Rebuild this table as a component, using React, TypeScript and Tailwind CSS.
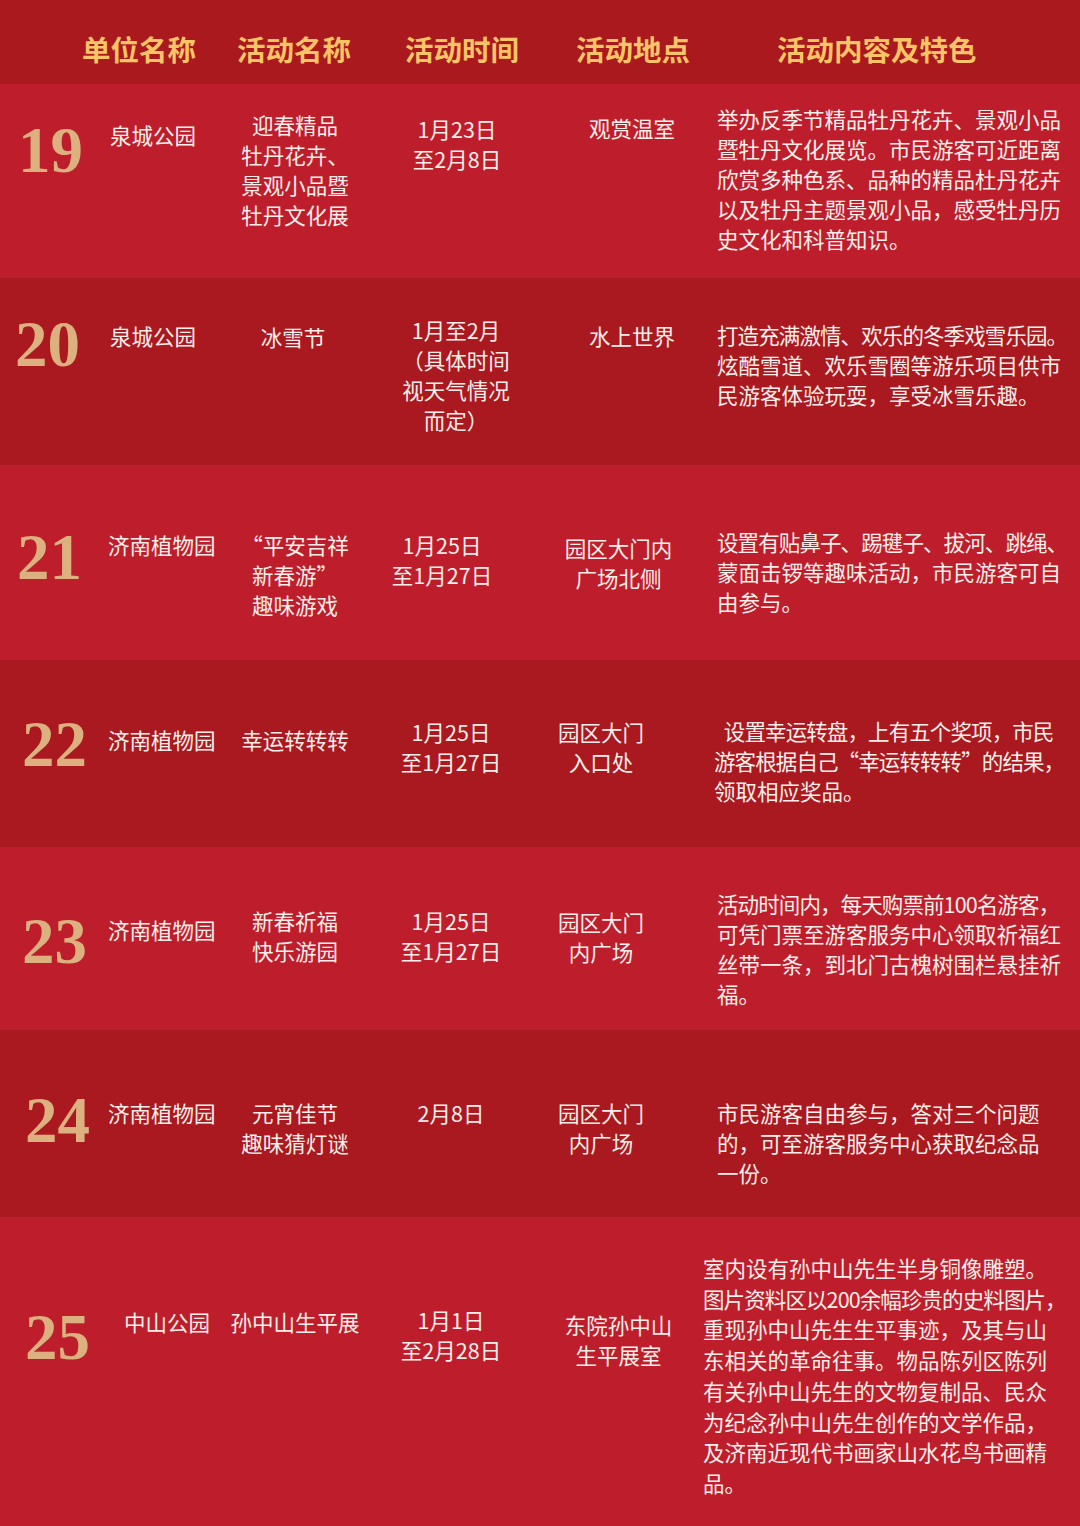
type Row = {
  no: string;
  h: string;
  bg: string;
  noCls: string;
  unit: string[];
  unitCls: string;
  act: string[];
  actCls: string;
  time: string[];
  timeCls: string;
  loc: string[];
  locCls: string;
  desc: string[];
  descCls: string;
  descLeft: number;
};

const LIGHT = "bg-[#be1e2c]";
const DARK = "bg-[#a9191f]";

const rows: Row[] = [
  {
    no: "19",
    h: "h-[194px]",
    bg: LIGHT,
    noCls: "pt-[34px] pl-[18px]",
    unit: ["泉城公园"],
    unitCls: "pt-[36px] pl-[10px]",
    act: ["迎春精品", "牡丹花卉、", "景观小品暨", "牡丹文化展"],
    actCls: "pt-[26px]",
    time: ["1月23日", "至2月8日"],
    timeCls: "pt-[30px] pl-[12px]",
    loc: ["观赏温室"],
    locCls: "pt-[29px] pl-[27px]",
    desc: [
      "举办反季节精品牡丹花卉、景观小品",
      "暨牡丹文化展览。市民游客可近距离",
      "欣赏多种色系、品种的精品杜丹花卉",
      "以及牡丹主题景观小品，感受牡丹历",
      "史文化和科普知识。",
    ],
    descCls: "pt-[20px] pl-[17px]",
    descLeft: 717,
  },
  {
    no: "20",
    h: "h-[187px]",
    bg: DARK,
    noCls: "pt-[34px] pl-[15px]",
    unit: ["泉城公园"],
    unitCls: "pt-[43px] pl-[10px]",
    act: ["冰雪节"],
    actCls: "pt-[44px] pr-[4px]",
    time: ["1月至2月", "（具体时间", "视天气情况", "而定）"],
    timeCls: "pt-[37px] pl-[10px]",
    loc: ["水上世界"],
    locCls: "pt-[43px] pl-[27px]",
    desc: [
      "打造充满激情、欢乐的冬季戏雪乐园。",
      "炫酷雪道、欢乐雪圈等游乐项目供市",
      "民游客体验玩耍，享受冰雪乐趣。",
    ],
    descCls: "pt-[42px] pl-[17px]",
    descLeft: 717,
  },
  {
    no: "21",
    h: "h-[195px]",
    bg: LIGHT,
    noCls: "pt-[60px] pl-[17px]",
    unit: ["济南植物园"],
    unitCls: "pt-[65px] pl-[8px]",
    act: ["“平安吉祥", "新春游”", "趣味游戏"],
    actCls: "pt-[65px]",
    time: ["1月25日", "至1月27日"],
    timeCls: "pt-[65px] pr-[18px]",
    loc: ["园区大门内", "广场北侧"],
    locCls: "pt-[68px]",
    desc: [
      "设置有贴鼻子、踢毽子、拔河、跳绳、",
      "蒙面击锣等趣味活动，市民游客可自",
      "由参与。",
    ],
    descCls: "pt-[62px] pl-[17px]",
    descLeft: 717,
  },
  {
    no: "22",
    h: "h-[187px]",
    bg: DARK,
    noCls: "pt-[52px] pl-[22px]",
    unit: ["济南植物园"],
    unitCls: "pt-[65px] pl-[8px]",
    act: ["幸运转转转"],
    actCls: "pt-[65px]",
    time: ["1月25日", "至1月27日"],
    timeCls: "pt-[57px]",
    loc: ["园区大门", "入口处"],
    locCls: "pt-[57px] pr-[35px]",
    desc: [
      "\u2002设置幸运转盘，上有五个奖项，市民",
      "游客根据自己“幸运转转转”的结果，",
      "领取相应奖品。",
    ],
    descCls: "pt-[56px] pl-[14px]",
    descLeft: 714,
  },
  {
    no: "23",
    h: "h-[183px]",
    bg: LIGHT,
    noCls: "pt-[62px] pl-[22px]",
    unit: ["济南植物园"],
    unitCls: "pt-[68px] pl-[8px]",
    act: ["新春祈福", "快乐游园"],
    actCls: "pt-[59px]",
    time: ["1月25日", "至1月27日"],
    timeCls: "pt-[59px]",
    loc: ["园区大门", "内广场"],
    locCls: "pt-[60px] pr-[35px]",
    desc: [
      "活动时间内，每天购票前100名游客，",
      "可凭门票至游客服务中心领取祈福红",
      "丝带一条，到北门古槐树围栏悬挂祈",
      "福。",
    ],
    descCls: "pt-[42px] pl-[17px]",
    descLeft: 717,
  },
  {
    no: "24",
    h: "h-[187px]",
    bg: DARK,
    noCls: "pt-[58px] pl-[25px]",
    unit: ["济南植物园"],
    unitCls: "pt-[68px] pl-[8px]",
    act: ["元宵佳节", "趣味猜灯谜"],
    actCls: "pt-[68px]",
    time: ["2月8日"],
    timeCls: "pt-[68px]",
    loc: ["园区大门", "内广场"],
    locCls: "pt-[68px] pr-[35px]",
    desc: [
      "市民游客自由参与，答对三个问题",
      "的，可至游客服务中心获取纪念品",
      "一份。",
    ],
    descCls: "pt-[68px] pl-[17px]",
    descLeft: 717,
  },
  {
    no: "25",
    h: "h-[309px]",
    bg: LIGHT,
    noCls: "pt-[88px] pl-[25px]",
    unit: ["中山公园"],
    unitCls: "pt-[90px] pl-[24px]",
    act: ["孙中山生平展"],
    actCls: "pt-[90px]",
    time: ["1月1日", "至2月28日"],
    timeCls: "pt-[88px]",
    loc: ["东院孙中山", "生平展室"],
    locCls: "pt-[93px]",
    desc: [
      "室内设有孙中山先生半身铜像雕塑。",
      "图片资料区以200余幅珍贵的史料图片，",
      "重现孙中山先生生平事迹，及其与山",
      "东相关的革命往事。物品陈列区陈列",
      "有关孙中山先生的文物复制品、民众",
      "为纪念孙中山先生创作的文学作品，",
      "及济南近现代书画家山水花鸟书画精",
      "品。",
    ],
    descCls: "pt-[36px] pl-[3px] leading-[30.7px]",
    descLeft: 700,
  },
];

// rough width of a line at 21.5px, to squeeze the ones that would run off the edge
function lineWidth(t: string) {
  let w = 0;
  for (const ch of t) w += /[0-9]/.test(ch) ? 11.8 : 21.5;
  return w;
}

function Lines({ items }: { items: string[] }) {
  return (
    <>
      {items.map((t, i) => (
        <div key={i} className="whitespace-pre">
          {t}
        </div>
      ))}
    </>
  );
}

function Desc({ items, left }: { items: string[]; left: number }) {
  return (
    <>
      {items.map((t, i) => (
        <div
          key={i}
          className={
            left + lineWidth(t) > 1066
              ? "whitespace-pre tracking-[-0.9px]"
              : "whitespace-pre"
          }
        >
          {t}
        </div>
      ))}
    </>
  );
}

export default function App() {
  return (
    <div className="w-[1080px] h-[1526px] overflow-hidden bg-[#be1e2c] font-['Noto_Sans_CJK_SC','Noto_Sans',sans-serif]">
      {/* header */}
      <div className="flex h-[84px] bg-[#a9191e] pt-[34px] text-[28.5px] leading-[30px] font-bold text-[#f8c466] whitespace-nowrap">
        <span className="ml-[82px]">单位名称</span>
        <span className="ml-[41px]">活动名称</span>
        <span className="ml-[54px]">活动时间</span>
        <span className="ml-[57px]">活动地点</span>
        <span className="ml-[87px]">活动内容及特色</span>
      </div>

      {rows.map((r) => (
        <div key={r.no} className={`flex ${r.h} ${r.bg} text-[21.5px] leading-[30px] text-[#fbeeea]`}>
          <div className={`w-[100px] shrink-0 ${r.noCls}`}>
            <span className="font-['Liberation_Serif',serif] font-bold text-[65px] leading-none text-[#dcb07f]">
              {r.no}
            </span>
          </div>
          <div className={`w-[125px] shrink-0 ${r.unitCls}`}>
            <Lines items={r.unit} />
          </div>
          <div className={`w-[140px] shrink-0 text-center ${r.actCls}`}>
            <Lines items={r.act} />
          </div>
          <div className={`w-[172px] shrink-0 text-center ${r.timeCls}`}>
            <Lines items={r.time} />
          </div>
          <div className={`w-[163px] shrink-0 text-center ${r.locCls}`}>
            <Lines items={r.loc} />
          </div>
          <div className={`flex-1 min-w-0 ${r.descCls}`}>
            <Desc items={r.desc} left={r.descLeft} />
          </div>
        </div>
      ))}
    </div>
  );
}
